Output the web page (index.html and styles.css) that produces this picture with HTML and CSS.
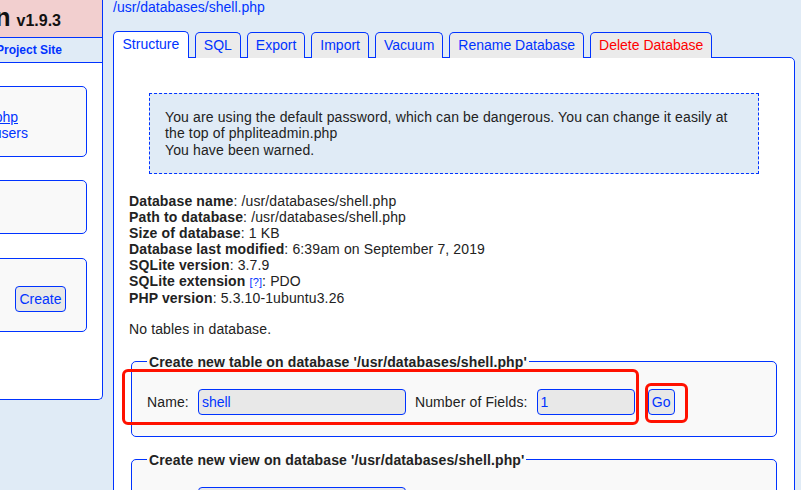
FILE: index.html
```html
<!DOCTYPE html>
<html>
<head>
<meta charset="utf-8">
<title>phpLiteAdmin</title>
<link rel="stylesheet" href="styles.css">
</head>
<body>
<div class="page">
  <aside class="sidebar">
    <div class="sb-head"><span class="logo">phpLiteAdmin</span> <span class="version">v1.9.3</span></div>
    <div class="sb-links"><a href="#">Documentation</a> | <a href="#">License</a> | <a href="#">Project Site</a></div>
    <div class="sb-body">
      <div class="sb-box sb-box1">
        <div class="db-line db-line1"><a href="#" class="u">shell.php</a></div>
        <div class="db-line db-line2"><span class="blue">users</span></div>
      </div>
      <div class="sb-box sb-box2"></div>
      <div class="sb-box sb-box3">
        <button class="btn">Create</button>
      </div>
    </div>
  </aside>

  <main class="main">
    <a href="#" class="path">/usr/databases/shell.php</a>
    <nav class="tabs">
      <a href="#" class="tab active">Structure</a>
      <a href="#" class="tab">SQL</a>
      <a href="#" class="tab">Export</a>
      <a href="#" class="tab">Import</a>
      <a href="#" class="tab">Vacuum</a>
      <a href="#" class="tab">Rename Database</a>
      <a href="#" class="tab danger">Delete Database</a>
    </nav>
    <section class="content">
      <div class="warning">You are using the default password, which can be dangerous. You can change it easily at the top of phpliteadmin.php<br>You have been warned.</div>
      <div class="info">
        <div><b>Database name</b>: /usr/databases/shell.php</div>
        <div><b>Path to database</b>: /usr/databases/shell.php</div>
        <div><b>Size of database</b>: 1 KB</div>
        <div><b>Database last modified</b>: 6:39am on September 7, 2019</div>
        <div><b>SQLite version</b>: 3.7.9</div>
        <div><b>SQLite extension</b> <a href="#" class="help">[?]</a>: PDO</div>
        <div><b>PHP version</b>: 5.3.10-1ubuntu3.26</div>
      </div>
      <p class="notables">No tables in database.</p>
      <fieldset class="fs">
        <legend>Create new table on database '/usr/databases/shell.php'</legend>
        <div class="row">
          <span class="lbl lbl-name">Name:</span>
          <input class="inp inp-name" type="text" value="shell">
          <span class="lbl lbl-num">Number of Fields:</span>
          <input class="inp inp-num" type="text" value="1">
          <button class="btn go">Go</button>
          <span class="mark mark1"></span>
          <span class="mark mark2"></span>
        </div>
      </fieldset>
      <fieldset class="fs fs2">
        <legend>Create new view on database '/usr/databases/shell.php'</legend>
        <div class="row">
          <span class="lbl lbl-name">Name:</span>
          <input class="inp inp-name" type="text" value="">
        </div>
      </fieldset>
    </section>
  </main>
</div>
</body>
</html>
```

FILE: styles.css
```css
* { box-sizing: border-box; }
html, body {
  margin: 0;
  padding: 0;
  background: #e0ebf6;
  overflow: hidden;
}
body {
  font-family: "Liberation Sans", Arial, sans-serif;
  font-size: 14px;
  color: #222;
  width: 801px;
  height: 490px;
}
a { color: #0033ff; text-decoration: none; }
.page {
  display: flex;
  align-items: flex-start;
}

/* Sidebar */
.sidebar {
  flex: 0 0 300px;
  width: 300px;
  margin-left: -197px;
  background: #fff;
  border: 1px solid #0033ff;
  border-top: none;
  border-radius: 0 0 5px 5px;
  height: 400px;
}
.sb-head {
  height: 38px;
  background: #f2cfcf;
  border-bottom: 1px solid #0033ff;
  text-align: right;
  padding-right: 41px;
  white-space: nowrap;
  line-height: 35px;
  padding-bottom: 2px;
  color: #111;
  font-weight: bold;
}
.logo { font-size: 25px; }
.version { font-size: 16px; margin-left: 2px; }
.sb-links {
  height: 25px;
  line-height: 24px;
  background: #e0ebf6;
  border-bottom: 1px solid #0033ff;
  text-align: right;
  padding-right: 40px;
  font-size: 12px;
  font-weight: bold;
  color: #0033ff;
  white-space: nowrap;
}
.sb-body {
  padding: 23px 15px 0 0;
}
.sb-box {
  background: #f9f9f9;
  border: 1px solid #0033ff;
  border-radius: 5px;
  margin-left: 20px;
}
.sb-box1 { height: 71px; padding-top: 22px; }
.sb-box2 { height: 54px; margin-top: 23px; }
.sb-box3 {
  height: 74px;
  margin-top: 24px;
  padding-top: 27px;
  padding-right: 20px;
  text-align: right;
}
.db-line { text-align: right; line-height: 16px; white-space: nowrap; }
.db-line1 { padding-right: 68px; }
.db-line2 { padding-right: 58px; }
.u { text-decoration: underline; }
.blue { color: #0033ff; }

.btn {
  font-family: "Liberation Sans", Arial, sans-serif;
  font-size: 14px;
  color: #0033ff;
  background: #e8e8e8;
  border: 1px solid #0033ff;
  border-radius: 4px;
  height: 26px;
  padding: 0 3.5px;
  margin: 0;
  line-height: 24px;
}

/* Main */
.main {
  flex: 1;
  margin-left: 10px;
  margin-right: 6px;
}
.path {
  display: block;
  line-height: 14px;
  height: 14px;
}
.tabs {
  display: flex;
  align-items: flex-end;
  gap: 6px;
  margin-top: 17px;
  position: relative;
  z-index: 1;
  margin-bottom: -1px;
}
.tab {
  display: block;
  height: 26px;
  line-height: 25px;
  padding: 0 8px;
  background: #ebebeb;
  border: 1px solid #0033ff;
  border-bottom: none;
  border-radius: 5px 5px 0 0;
  white-space: nowrap;
}
.tab.active {
  background: #fff;
  height: 27px;
  padding: 0 8.5px;
  line-height: 25px;
}
.tab.danger { color: #ff0000; }

.content {
  background: #fff;
  border: 1px solid #0033ff;
  border-radius: 0 5px 0 0;
  padding: 15px;
  height: 600px;
  letter-spacing: 0.13px;
}
.warning {
  margin: 20px 20px 20px;
  background: #e0ebf6;
  border: 1px dashed #0033ff;
  padding: 15px;
  line-height: 16.3px;
}
.info { line-height: 16px; margin-top: -1px; }
.help { font-size: 11px; }
.notables { margin: 15px 0 0; line-height: 16px; }

.fs {
  margin: 17px 2px 0;
  border: 1px solid #0033ff;
  border-radius: 5px;
  background: #f9f9f9;
  padding: 15px;
  padding-top: 15px;
}
.fs legend {
  padding: 0 2px;
  font-weight: bold;
  line-height: 16px;
}
.fs2 { margin-top: 15px; }
.row {
  position: relative;
  display: flex;
  align-items: center;
  padding: 4px 0 6px;
}
.lbl { white-space: nowrap; }
.lbl-name { margin-right: 9px; }
.lbl-num { margin-right: 9px; }
.inp {
  font-family: "Liberation Sans", Arial, sans-serif;
  font-size: 14px;
  color: #0033ff;
  background: #e8e8e8;
  border: 1px solid #0033ff;
  border-radius: 4px;
  height: 26px;
  padding: 0 3px;
  margin: 0;
}
.inp-name { width: 208px; margin-right: 9px; }
.inp-num { width: 98px; margin-right: 13px; }
.go { width: 27px; padding: 0; letter-spacing: 0; }

.mark {
  position: absolute;
  border: 3px solid #ff1100;
  border-radius: 6px;
  pointer-events: none;
}
.mark1 { left: -25px; top: -16px; width: 517px; height: 56px; }
.mark2 { left: 498px; top: -2px; width: 43px; height: 40px; }
```
